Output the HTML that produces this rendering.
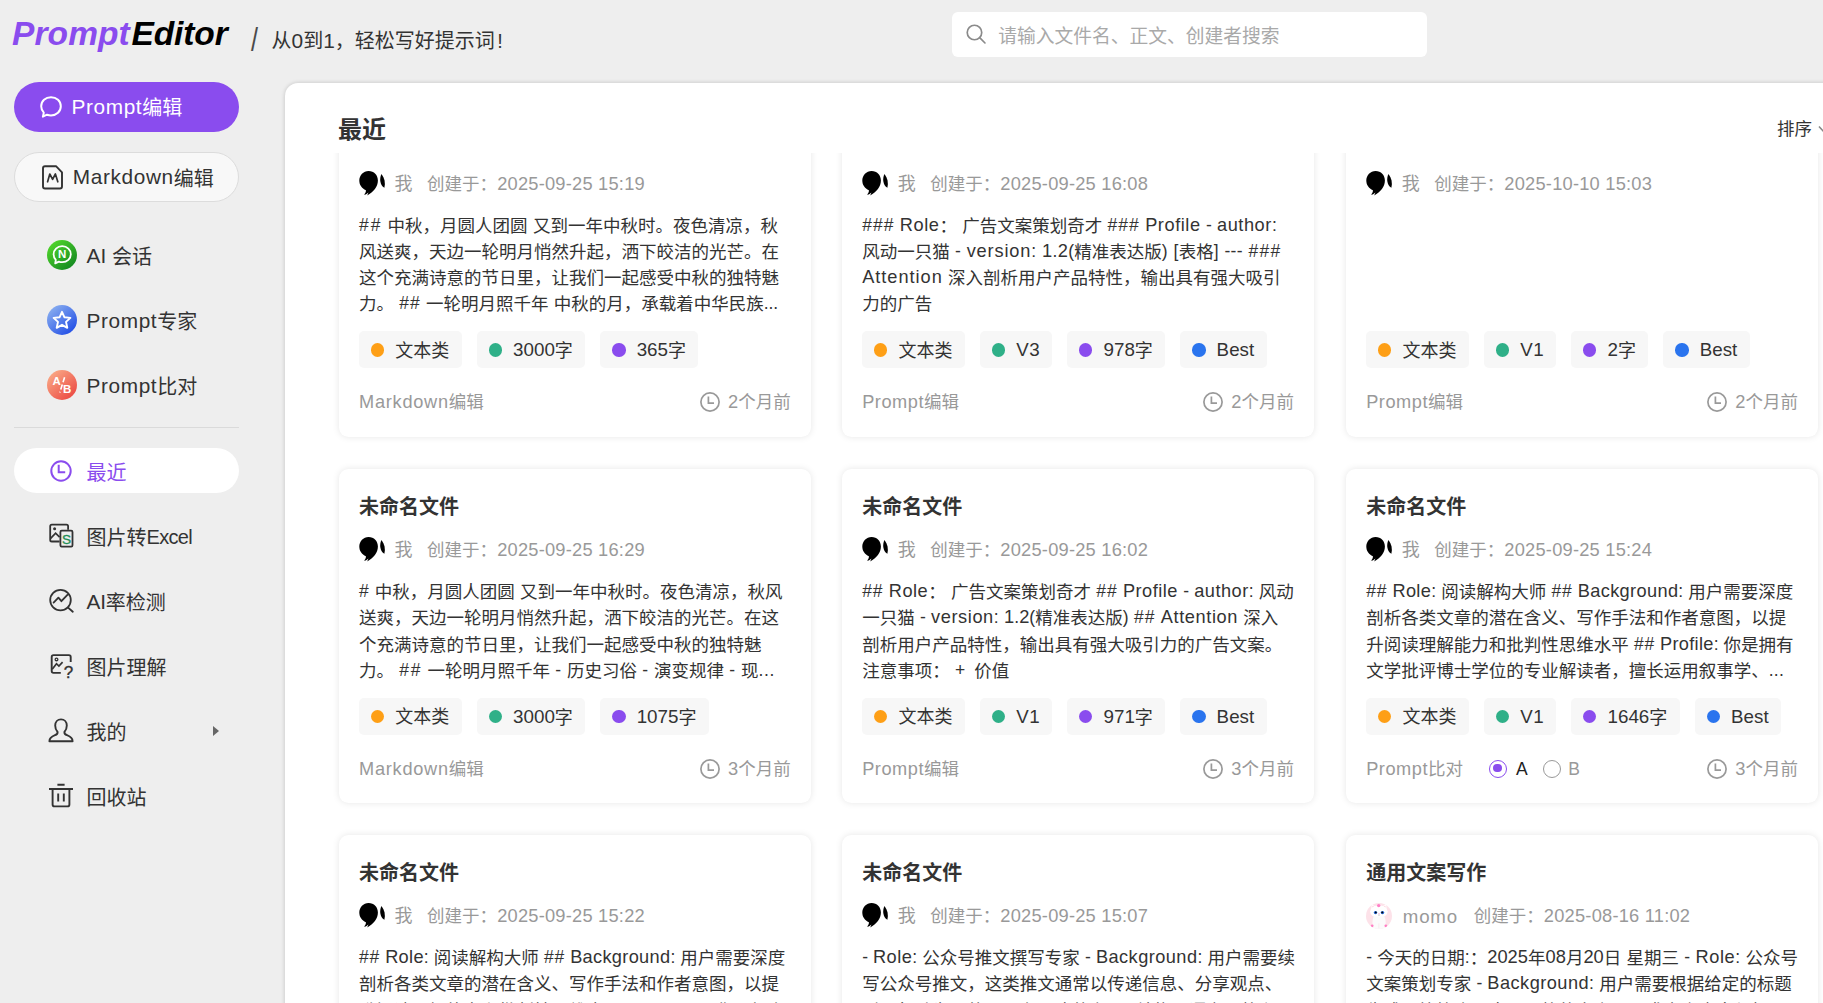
<!DOCTYPE html>
<html lang="zh-CN">
<head>
<meta charset="utf-8">
<title>PromptEditor</title>
<style>
*{box-sizing:border-box;margin:0;padding:0}
html,body{width:1823px;height:1003px;overflow:hidden;background:#eeeeee}
body{font-family:"Liberation Sans","Noto Sans CJK SC",sans-serif;color:#333;position:relative;--ls:1.04;--lsp:0.03em}
.a{letter-spacing:var(--ex,0px)}
.l{font-size:calc(1em * var(--ls));letter-spacing:calc(var(--lsp) + var(--ex,0px))}
.h{letter-spacing:calc(0.06em + var(--ex,0px))}
.n{font-size:1.045em}
.mt .a,.bt .a{position:relative;top:-1px}
.btn2 .bt .a{top:-1.4px}
.desc .a{position:relative;top:-0.9px}
.tt .a{position:relative;top:-1.2px}
.nm .a{position:relative;top:1px}
svg{display:block}
.logo{position:absolute;left:12px;top:14.3px;font-size:33.5px;line-height:40px;font-weight:700;font-style:italic;white-space:nowrap;letter-spacing:0}
.lp{color:#8a4cee;letter-spacing:0.1px}.le{color:#000;margin-left:1.6px;letter-spacing:-0.1px}
.slash{position:absolute;left:248.6px;top:22px;width:11px;height:36px;font-size:33px;line-height:36px;color:#4a4a4a;white-space:nowrap;text-align:center;transform:scaleX(0.76)}
.slogan{position:absolute;left:271.5px;top:26px;font-size:20px;line-height:30px;white-space:nowrap;color:#333}
.search{position:absolute;left:952px;top:12px;width:475px;height:45px;background:#fff;border-radius:6px}
.search .si{position:absolute;left:12.6px;top:11.2px}
.search .ph{position:absolute;left:46.3px;top:1.5px;line-height:45px;font-size:18.75px;color:#a9a9a9;white-space:nowrap}
.btn1,.btn2{position:absolute;left:14px;width:225.2px;height:50px;border-radius:25px;white-space:nowrap}
.btn1{top:82px;background:#8a4cee;color:#fff}
.btn2{top:152px;background:#f8f8f8;border:1px solid #dcdcdc;color:#333}
.btn1 .bi{position:absolute;left:25px;top:13px}
.btn2 .bi{position:absolute;left:26px;top:10px}
.bt{position:absolute;left:57.5px;top:0.8px;line-height:50px;font-size:20px}
.btn2 .bt{left:57.8px;top:0.5px}
.mi{position:absolute;left:0;width:260px;height:50px;white-space:nowrap}
.ic{position:absolute}
.mt{position:absolute;left:86.5px;top:2px;line-height:50px;font-size:20px;color:#333}
.divider{position:absolute;left:14px;top:427px;width:225px;height:1px;background:#dadada}
.recent{position:absolute;left:14px;top:447.8px;width:225.2px;height:45.2px;border-radius:22.5px;background:#fff;white-space:nowrap}
.recent .mt{left:72.5px;top:3px;line-height:45px;color:#8a4cee}
.caret{position:absolute;left:213px;top:20px;width:0;height:0;border-left:6.2px solid #666;border-top:5px solid transparent;border-bottom:5px solid transparent}
.panel{position:absolute;left:285px;top:82.5px;width:1600px;height:1000px;background:#fff;border-radius:13px 0 0 0;box-shadow:0 0 4.5px rgba(0,0,0,.19)}
.ph1{position:absolute;left:53px;top:29px;font-size:24px;line-height:36px;font-weight:700;color:#333}
.sort{position:absolute;left:1492px;top:33px;font-size:17.5px;line-height:26px;color:#333;white-space:nowrap}
.sort svg{position:absolute;left:41px;top:9px}
.clip{position:absolute;left:320px;top:153px;width:1503px;height:850px;overflow:hidden}
.card{position:absolute;width:472.2px;height:334px;background:#fff;border-radius:9.5px;box-shadow:0 0 7px rgba(0,0,0,.1)}
.ct{position:absolute;left:20.15px;top:22.8px;font-size:20px;line-height:30px;font-weight:700;color:#333;white-space:nowrap}
.meta{position:absolute;left:20.15px;top:68.3px;height:26px;line-height:26px;font-size:17.5px;color:#999;white-space:nowrap}
.av{position:absolute;left:0;top:-0.9px;width:27px;height:27px}
.nm{margin-left:35.5px;font-size:18px}
.dt{margin-left:14.5px}
.dt .n{letter-spacing:0.22px;margin-left:0.2px}
.desc{position:absolute;left:20.15px;top:110.2px;font-size:17.5px;line-height:26.25px;color:#333;word-spacing:0.4px}
.ln{white-space:pre;height:26.25px}
.tags{position:absolute;left:20.15px;top:228.9px;height:37.2px;white-space:nowrap;display:flex;gap:15.1px}
.tag{display:inline-flex;align-items:center;height:37.2px;padding:0 12.4px 0 11.8px;background:#f7f7f7;border-radius:5px;font-size:18px;color:#333}
.dot{display:inline-block;width:13.4px;height:13.4px;border-radius:50%;margin-right:11.1px;flex:none;position:relative;top:0.1px}
.dot.o{background:#fe9f16}.dot.g{background:#2fb088}.dot.p{background:#8a4cee}.dot.b{background:#2a74ee}
.tt{line-height:37.2px;position:relative;top:1.5px}
.foot{position:absolute;left:20.15px;right:20.3px;top:284.8px;height:30px;line-height:30px;font-size:17.5px;color:#999;white-space:nowrap}
.ago{position:absolute;right:0;top:0;padding-left:28px}
.ago .ck{position:absolute;left:-1.2px;top:4px}
.radio{display:inline-block;width:18px;height:18px;border-radius:50%;border:1.4px solid #999;vertical-align:-3px;position:relative;background:#fff}
.radio.on{border-color:#8a4cee;border-width:1.7px;margin-left:26px}
.radio.on i{position:absolute;left:2.9px;top:2.9px;width:8.8px;height:8.8px;border-radius:50%;background:#8a4cee}
.ra{color:#222;margin:0 15px 0 9px}
.rb{margin-left:7.5px}

</style>
</head>
<body>
<div class="logo"><span class="lp">Prompt</span><span class="le">Editor</span></div>
<div class="slash">/</div>
<div class="slogan">从<span class="a"><span class="n">0</span></span>到<span class="a"><span class="n">1</span></span>，轻松写好提示词<span style="margin-left:2.6px">!</span></div>
<div class="search"><svg class="si" width="22.3" height="22.3" viewBox="0 0 24 24"><circle cx="10.2" cy="10.2" r="7.8" fill="none" stroke="#8a8a8a" stroke-width="1.8"/><path d="M15.8 15.8L21.5 21.5" stroke="#8a8a8a" stroke-width="1.8" stroke-linecap="round"/></svg><span class="ph">请输入文件名、正文、创建者搜索</span></div>
<div class="btn1"><svg class="bi" width="24" height="24" viewBox="0 0 24 24"><path d="M12 2.2C17.6 2.2 21.8 6.2 21.8 11.3C21.8 16.4 17.6 20.4 12 20.4C10.6 20.4 9.2 20.1 8 19.7L3.9 21.6L4.8 17.6C3.2 16 2.2 13.8 2.2 11.3C2.2 6.2 6.4 2.2 12 2.2Z" fill="none" stroke="#fff" stroke-width="2" stroke-linejoin="round"/></svg><span class="bt"><span class="a"><span class="l">Prompt</span></span>编辑</span></div>
<div class="btn2"><svg class="bi" width="24" height="28" viewBox="41 163 24 28"><path d="M45 166.2H56L62 172.3V186.5C62 187.6 61.1 188.5 60 188.5H45C43.9 188.5 43 187.6 43 186.5V168.2C43 167.1 43.9 166.2 45 166.2Z" fill="none" stroke="#333" stroke-width="1.9" stroke-linejoin="round"/><path d="M47.6 181.8L49.8 174L52.6 179.4L55.4 174L57.8 181.8" fill="none" stroke="#333" stroke-width="1.7" stroke-linejoin="round" stroke-linecap="round"/></svg><span class="bt"><span class="a"><span class="l">Markdown</span></span>编辑</span></div>
<div class="mi" style="top:230px"><span class="ic" style="left:47px;width:30px;height:30px;top:10px"><svg width="30" height="30" viewBox="0 0 30 30"><defs><linearGradient id="gA" x1="0.15" y1="0.1" x2="0.85" y2="0.9"><stop offset="0" stop-color="#4fd42a"/><stop offset="1" stop-color="#158a22"/></linearGradient></defs><circle cx="15" cy="15" r="15" fill="url(#gA)"/><path d="M15.2 6.2C20.2 6.2 23.8 9.8 23.8 14.2C23.8 18.6 20.2 22.2 15.2 22.2C14 22.2 12.9 22 11.9 21.6L8.2 23.4L8.8 19.9C7.4 18.4 6.6 16.4 6.6 14.2C6.6 9.8 10.2 6.2 15.2 6.2Z" fill="none" stroke="#fff" stroke-width="1.8" stroke-linejoin="round"/><text x="15.2" y="18.3" font-family="'Liberation Sans',sans-serif" font-weight="700" font-size="11.5" fill="#fff" text-anchor="middle">N</text></svg></span><span class="mt"><span class="a" style="--ex:-0.50px"><span class="l">AI</span></span> 会话</span></div>
<div class="mi" style="top:295px"><span class="ic" style="left:47px;width:30px;height:30px;top:10px"><svg width="30" height="30" viewBox="0 0 30 30"><defs><linearGradient id="gS" x1="0.15" y1="0.1" x2="0.85" y2="0.9"><stop offset="0" stop-color="#86abef"/><stop offset="1" stop-color="#2450e6"/></linearGradient></defs><circle cx="15" cy="15" r="15" fill="url(#gS)"/><path d="M15 6.8L17.5 12.3L23.4 12.9L19 16.9L20.3 22.8L15 19.8L9.7 22.8L11 16.9L6.6 12.9L12.5 12.3Z" fill="none" stroke="#fff" stroke-width="1.9" stroke-linejoin="round"/></svg></span><span class="mt"><span class="a"><span class="l">Prompt</span></span>专家</span></div>
<div class="mi" style="top:360px"><span class="ic" style="left:47px;width:30px;height:30px;top:10px"><svg width="30" height="30" viewBox="0 0 30 30"><defs><linearGradient id="gB" x1="0.15" y1="0.1" x2="0.85" y2="0.9"><stop offset="0" stop-color="#f9a684"/><stop offset="1" stop-color="#ec4c45"/></linearGradient></defs><circle cx="15" cy="15" r="15" fill="url(#gB)"/><text x="5.6" y="15.4" font-family="'Liberation Sans',sans-serif" font-weight="700" font-size="11.5" fill="#fff">A</text><text x="16" y="22.6" font-family="'Liberation Sans',sans-serif" font-weight="700" font-size="11.5" fill="#fff">B</text><path d="M17.6 7.2L12.8 22.4" stroke="#fff" stroke-width="1.6" stroke-dasharray="5.2 2.4"/></svg></span><span class="mt"><span class="a"><span class="l">Prompt</span></span>比对</span></div>
<div class="divider"></div>
<div class="recent"><span class="ic" style="left:35px;width:24px;height:24px;top:11.2px"><svg width="24" height="24" viewBox="0 0 24 24"><circle cx="12" cy="12" r="9.7" fill="none" stroke="#8a4cee" stroke-width="2"/><path d="M9.7 5.8V13.2H16.2" fill="none" stroke="#8a4cee" stroke-width="2"/></svg></span><span class="mt">最近</span></div>
<div class="mi" style="top:511px"><span class="ic" style="left:47px;width:28px;height:28px;top:11px"><svg width="28" height="28" viewBox="47 522 28 28"><path d="M59.6 541.5H51.8C50.9 541.5 50.2 540.8 50.2 539.9V526.2C50.2 525.3 50.9 524.6 51.8 524.6H66.5C67.4 524.6 68.1 525.3 68.1 526.2V529.8" fill="none" stroke="#333" stroke-width="1.8"/><circle cx="54.6" cy="528.7" r="1.5" fill="#333"/><path d="M50.4 538.6L55.6 533.2L59.6 537.2" fill="none" stroke="#333" stroke-width="1.7"/><rect x="60.4" y="530.6" width="12.1" height="16" rx="1.3" fill="none" stroke="#333" stroke-width="1.8"/><text x="66.5" y="544.2" font-family="'Liberation Sans',sans-serif" font-size="13.6" fill="#1e8f55" stroke="#1e8f55" stroke-width="0.35" text-anchor="middle">S</text></svg></span><span class="mt">图片转<span class="a"><span class="l" style="font-size:1em;letter-spacing:-0.66px">Excel</span></span></span></div>
<div class="mi" style="top:576px"><span class="ic" style="left:47px;width:28px;height:28px;top:11px"><svg width="28" height="28" viewBox="47 587 28 28"><circle cx="60.5" cy="600.1" r="10.3" fill="none" stroke="#333" stroke-width="1.8"/><path d="M68.1 607.6L72.8 611.7" stroke="#333" stroke-width="1.9" stroke-linecap="round"/><path d="M53.6 602.6L58.4 597.6L61.4 601.2L67.4 594.8" fill="none" stroke="#333" stroke-width="1.8" stroke-linejoin="round" stroke-linecap="round"/></svg></span><span class="mt"><span class="a" style="--ex:-0.80px"><span class="l">AI</span></span>率检测</span></div>
<div class="mi" style="top:641px"><span class="ic" style="left:47px;width:28px;height:28px;top:11px"><svg width="28" height="28" viewBox="47 652 28 28"><path d="M60.8 672.9H53.5C52.5 672.9 51.7 672.1 51.7 671.1V656.9C51.7 655.9 52.5 655.1 53.5 655.1H68.9C69.9 655.1 70.7 655.9 70.7 656.9V661.9" fill="none" stroke="#333" stroke-width="1.9"/><circle cx="56.5" cy="659.4" r="1.35" fill="none" stroke="#333" stroke-width="1.3"/><path d="M52.2 669.3L56.5 663.7L58.9 666L62.6 662.1" fill="none" stroke="#333" stroke-width="1.7"/><text x="68.5" y="677.5" font-family="'Liberation Sans',sans-serif" font-size="17" fill="#333" stroke="#333" stroke-width="0.35" text-anchor="middle">?</text></svg></span><span class="mt">图片理解</span></div>
<div class="mi" style="top:706px"><span class="ic" style="left:47px;width:28px;height:28px;top:11px"><svg width="28" height="28" viewBox="0 0 28 28"><path d="M14 2.4C17.4 2.4 19.8 5 19.8 8.6C19.8 11.4 18.8 13.6 17.4 15C17.2 16.6 18 17.4 20 18.2C23.4 19.6 25.6 21 25.6 24.2H2.4C2.4 21 4.6 19.6 8 18.2C10 17.4 10.8 16.6 10.6 15C9.2 13.6 8.2 11.4 8.2 8.6C8.2 5 10.6 2.4 14 2.4Z" fill="none" stroke="#333" stroke-width="1.9" stroke-linejoin="round"/></svg></span><span class="mt">我的</span><span class="caret"></span></div>
<div class="mi" style="top:771px"><span class="ic" style="left:47px;width:28px;height:28px;top:11px"><svg width="28" height="28" viewBox="0 0 28 28"><path d="M10.4 2.7H17.6M2 7H26M5.6 7V22.4C5.6 23.5 6.5 24.4 7.6 24.4H20.4C21.5 24.4 22.4 23.5 22.4 22.4V7M11.2 11.6V19.6M16.8 11.6V19.6" fill="none" stroke="#333" stroke-width="1.9"/></svg></span><span class="mt">回收站</span></div>
<div class="panel">
<div class="ph1">最近</div>
<div class="sort">排序<svg width="14" height="10" viewBox="0 0 14 10"><path d="M1 1.5 L6 7 L11 1.5" fill="none" stroke="#888" stroke-width="1.6"/></svg></div>
</div>
<div class="clip">
<div class="card" style="left:18.85px;top:-50.7px;height:334.6px">
<div class="ct">未命名文件</div>
<div class="meta"><span class="av"><svg width="27" height="27" viewBox="0 0 27 27"><path d="M9.6 0.9C15 0.9 18.9 5 18.9 10.4C18.9 16.6 14.6 21.6 8.2 25.4L9.4 22.6C8 24 6.6 24.8 5.2 24.6C6.4 23.4 7 22 6.9 20.3C2.8 18.6 0.3 15 0.3 10.6C0.3 5.2 4.4 0.9 9.6 0.9Z" fill="#000"/><path d="M22.5 4C20.2 8.5 20.8 15.2 25.4 17.8C26.6 13 25.6 8 22.5 4Z" fill="#000"/></svg></span><span class="nm">我</span><span class="dt">创建于：<span class="n">2025-09-25 15:19</span></span></div>
<div class="desc">
<div class="ln" id="ln0_0"><span class="a" style="--ex:0.90px"><span class="h">##</span></span> 中秋，月圆人团圆 又到一年中秋时。夜色清凉，秋</div>
<div class="ln" id="ln0_1">风送爽，天边一轮明月悄然升起，洒下皎洁的光芒。在</div>
<div class="ln" id="ln0_2">这个充满诗意的节日里，让我们一起感受中秋的独特魅</div>
<div class="ln" id="ln0_3">力。 <span class="a" style="--ex:-0.08px"><span class="h">##</span></span> 一轮明月照千年 中秋的月，承载着中华民族<span class="a" style="--ex:-0.08px">...</span></div>
</div>
<div class="tags">
<span class="tag"><i class="dot o"></i><span class="tt">文本类</span></span>
<span class="tag"><i class="dot g"></i><span class="tt"><span class="a"><span class="n">3000</span></span>字</span></span>
<span class="tag"><i class="dot p"></i><span class="tt"><span class="a"><span class="n">365</span></span>字</span></span>
</div>
<div class="foot"><span class="fl"><span class="a" style="--ex:0.20px"><span class="l">Markdown</span></span>编辑</span><span class="ago"><svg class="ck" width="22" height="22" viewBox="0 0 22 22"><circle cx="11" cy="11" r="9.1" fill="none" stroke="#999" stroke-width="1.7"/><path d="M9.4 5.6V12.2H15" fill="none" stroke="#999" stroke-width="1.7"/></svg><span class="agot"><span class="a"><span class="n">2</span></span>个月前</span></span></div>
</div>
<div class="card" style="left:522.00px;top:-50.7px;height:334.6px">
<div class="ct">未命名文件</div>
<div class="meta"><span class="av"><svg width="27" height="27" viewBox="0 0 27 27"><path d="M9.6 0.9C15 0.9 18.9 5 18.9 10.4C18.9 16.6 14.6 21.6 8.2 25.4L9.4 22.6C8 24 6.6 24.8 5.2 24.6C6.4 23.4 7 22 6.9 20.3C2.8 18.6 0.3 15 0.3 10.6C0.3 5.2 4.4 0.9 9.6 0.9Z" fill="#000"/><path d="M22.5 4C20.2 8.5 20.8 15.2 25.4 17.8C26.6 13 25.6 8 22.5 4Z" fill="#000"/></svg></span><span class="nm">我</span><span class="dt">创建于：<span class="n">2025-09-25 16:08</span></span></div>
<div class="desc">
<div class="ln" id="ln1_0"><span class="a" style="--ex:0.01px"><span class="h">###</span> <span class="l">Role</span></span>： 广告文案策划奇才 <span class="a" style="--ex:0.01px"><span class="h">###</span> <span class="l">Profile</span> - <span class="l">author</span>:</span></div>
<div class="ln" id="ln1_1">风动一只猫 <span class="a" style="--ex:0.31px">- <span class="l">version</span>: <span class="n">1</span>.<span class="n">2</span>(</span>精准表达版<span class="a" style="--ex:0.31px">) [</span>表格<span class="a" style="--ex:0.31px">] --- <span class="h">###</span></span></div>
<div class="ln" id="ln1_2"><span class="a" style="--ex:0.44px"><span class="l">Attention</span></span> 深入剖析用户产品特性，输出具有强大吸引</div>
<div class="ln" id="ln1_3">力的广告</div>
</div>
<div class="tags">
<span class="tag"><i class="dot o"></i><span class="tt">文本类</span></span>
<span class="tag"><i class="dot g"></i><span class="tt"><span class="a"><span class="l">V</span><span class="n">3</span></span></span></span>
<span class="tag"><i class="dot p"></i><span class="tt"><span class="a"><span class="n">978</span></span>字</span></span>
<span class="tag"><i class="dot b"></i><span class="tt"><span class="a" style="--ex:-0.50px"><span class="l">Best</span></span></span></span>
</div>
<div class="foot"><span class="fl"><span class="a"><span class="l">Prompt</span></span>编辑</span><span class="ago"><svg class="ck" width="22" height="22" viewBox="0 0 22 22"><circle cx="11" cy="11" r="9.1" fill="none" stroke="#999" stroke-width="1.7"/><path d="M9.4 5.6V12.2H15" fill="none" stroke="#999" stroke-width="1.7"/></svg><span class="agot"><span class="a"><span class="n">2</span></span>个月前</span></span></div>
</div>
<div class="card" style="left:1026.00px;top:-50.7px;height:334.6px">
<div class="ct">未命名文件</div>
<div class="meta"><span class="av"><svg width="27" height="27" viewBox="0 0 27 27"><path d="M9.6 0.9C15 0.9 18.9 5 18.9 10.4C18.9 16.6 14.6 21.6 8.2 25.4L9.4 22.6C8 24 6.6 24.8 5.2 24.6C6.4 23.4 7 22 6.9 20.3C2.8 18.6 0.3 15 0.3 10.6C0.3 5.2 4.4 0.9 9.6 0.9Z" fill="#000"/><path d="M22.5 4C20.2 8.5 20.8 15.2 25.4 17.8C26.6 13 25.6 8 22.5 4Z" fill="#000"/></svg></span><span class="nm">我</span><span class="dt">创建于：<span class="n">2025-10-10 15:03</span></span></div>
<div class="desc">
</div>
<div class="tags">
<span class="tag"><i class="dot o"></i><span class="tt">文本类</span></span>
<span class="tag"><i class="dot g"></i><span class="tt"><span class="a"><span class="l">V</span><span class="n">1</span></span></span></span>
<span class="tag"><i class="dot p"></i><span class="tt"><span class="a"><span class="n">2</span></span>字</span></span>
<span class="tag"><i class="dot b"></i><span class="tt"><span class="a" style="--ex:-0.50px"><span class="l">Best</span></span></span></span>
</div>
<div class="foot"><span class="fl"><span class="a"><span class="l">Prompt</span></span>编辑</span><span class="ago"><svg class="ck" width="22" height="22" viewBox="0 0 22 22"><circle cx="11" cy="11" r="9.1" fill="none" stroke="#999" stroke-width="1.7"/><path d="M9.4 5.6V12.2H15" fill="none" stroke="#999" stroke-width="1.7"/></svg><span class="agot"><span class="a"><span class="n">2</span></span>个月前</span></span></div>
</div>
<div class="card" style="left:18.85px;top:315.9px">
<div class="ct">未命名文件</div>
<div class="meta"><span class="av"><svg width="27" height="27" viewBox="0 0 27 27"><path d="M9.6 0.9C15 0.9 18.9 5 18.9 10.4C18.9 16.6 14.6 21.6 8.2 25.4L9.4 22.6C8 24 6.6 24.8 5.2 24.6C6.4 23.4 7 22 6.9 20.3C2.8 18.6 0.3 15 0.3 10.6C0.3 5.2 4.4 0.9 9.6 0.9Z" fill="#000"/><path d="M22.5 4C20.2 8.5 20.8 15.2 25.4 17.8C26.6 13 25.6 8 22.5 4Z" fill="#000"/></svg></span><span class="nm">我</span><span class="dt">创建于：<span class="n">2025-09-25 16:29</span></span></div>
<div class="desc">
<div class="ln" id="ln3_0"><span class="a" style="--ex:-0.20px"><span class="h">#</span></span> 中秋，月圆人团圆 又到一年中秋时。夜色清凉，秋风</div>
<div class="ln" id="ln3_1">送爽，天边一轮明月悄然升起，洒下皎洁的光芒。在这</div>
<div class="ln" id="ln3_2">个充满诗意的节日里，让我们一起感受中秋的独特魅</div>
<div class="ln" id="ln3_3">力。 <span class="a" style="--ex:0.67px"><span class="h">##</span></span> 一轮明月照千年 <span class="a" style="--ex:0.67px">-</span> 历史习俗 <span class="a" style="--ex:0.67px">-</span> 演变规律 <span class="a" style="--ex:0.67px">-</span> 现<span class="a" style="--ex:0.67px">...</span></div>
</div>
<div class="tags">
<span class="tag"><i class="dot o"></i><span class="tt">文本类</span></span>
<span class="tag"><i class="dot g"></i><span class="tt"><span class="a"><span class="n">3000</span></span>字</span></span>
<span class="tag"><i class="dot p"></i><span class="tt"><span class="a"><span class="n">1075</span></span>字</span></span>
</div>
<div class="foot"><span class="fl"><span class="a" style="--ex:0.20px"><span class="l">Markdown</span></span>编辑</span><span class="ago"><svg class="ck" width="22" height="22" viewBox="0 0 22 22"><circle cx="11" cy="11" r="9.1" fill="none" stroke="#999" stroke-width="1.7"/><path d="M9.4 5.6V12.2H15" fill="none" stroke="#999" stroke-width="1.7"/></svg><span class="agot"><span class="a"><span class="n">3</span></span>个月前</span></span></div>
</div>
<div class="card" style="left:522.00px;top:315.9px">
<div class="ct">未命名文件</div>
<div class="meta"><span class="av"><svg width="27" height="27" viewBox="0 0 27 27"><path d="M9.6 0.9C15 0.9 18.9 5 18.9 10.4C18.9 16.6 14.6 21.6 8.2 25.4L9.4 22.6C8 24 6.6 24.8 5.2 24.6C6.4 23.4 7 22 6.9 20.3C2.8 18.6 0.3 15 0.3 10.6C0.3 5.2 4.4 0.9 9.6 0.9Z" fill="#000"/><path d="M22.5 4C20.2 8.5 20.8 15.2 25.4 17.8C26.6 13 25.6 8 22.5 4Z" fill="#000"/></svg></span><span class="nm">我</span><span class="dt">创建于：<span class="n">2025-09-25 16:02</span></span></div>
<div class="desc">
<div class="ln" id="ln4_0"><span class="a" style="--ex:-0.05px"><span class="h">##</span> <span class="l">Role</span></span>： 广告文案策划奇才 <span class="a" style="--ex:-0.05px"><span class="h">##</span> <span class="l">Profile</span> - <span class="l">author</span>:</span> 风动</div>
<div class="ln" id="ln4_1">一只猫 <span class="a" style="--ex:0.04px">- <span class="l">version</span>: <span class="n">1</span>.<span class="n">2</span>(</span>精准表达版<span class="a" style="--ex:0.04px">) <span class="h">##</span> <span class="l">Attention</span></span> 深入</div>
<div class="ln" id="ln4_2">剖析用户产品特性，输出具有强大吸引力的广告文案。</div>
<div class="ln" id="ln4_3">注意事项： <span class="a" style="--ex:3.80px">+</span> 价值</div>
</div>
<div class="tags">
<span class="tag"><i class="dot o"></i><span class="tt">文本类</span></span>
<span class="tag"><i class="dot g"></i><span class="tt"><span class="a"><span class="l">V</span><span class="n">1</span></span></span></span>
<span class="tag"><i class="dot p"></i><span class="tt"><span class="a"><span class="n">971</span></span>字</span></span>
<span class="tag"><i class="dot b"></i><span class="tt"><span class="a" style="--ex:-0.50px"><span class="l">Best</span></span></span></span>
</div>
<div class="foot"><span class="fl"><span class="a"><span class="l">Prompt</span></span>编辑</span><span class="ago"><svg class="ck" width="22" height="22" viewBox="0 0 22 22"><circle cx="11" cy="11" r="9.1" fill="none" stroke="#999" stroke-width="1.7"/><path d="M9.4 5.6V12.2H15" fill="none" stroke="#999" stroke-width="1.7"/></svg><span class="agot"><span class="a"><span class="n">3</span></span>个月前</span></span></div>
</div>
<div class="card" style="left:1026.00px;top:315.9px">
<div class="ct">未命名文件</div>
<div class="meta"><span class="av"><svg width="27" height="27" viewBox="0 0 27 27"><path d="M9.6 0.9C15 0.9 18.9 5 18.9 10.4C18.9 16.6 14.6 21.6 8.2 25.4L9.4 22.6C8 24 6.6 24.8 5.2 24.6C6.4 23.4 7 22 6.9 20.3C2.8 18.6 0.3 15 0.3 10.6C0.3 5.2 4.4 0.9 9.6 0.9Z" fill="#000"/><path d="M22.5 4C20.2 8.5 20.8 15.2 25.4 17.8C26.6 13 25.6 8 22.5 4Z" fill="#000"/></svg></span><span class="nm">我</span><span class="dt">创建于：<span class="n">2025-09-25 15:24</span></span></div>
<div class="desc">
<div class="ln" id="ln5_0"><span class="a" style="--ex:-0.19px"><span class="h">##</span> <span class="l">Role</span>:</span> 阅读解构大师 <span class="a" style="--ex:-0.19px"><span class="h">##</span> <span class="l">Background</span>:</span> 用户需要深度</div>
<div class="ln" id="ln5_1">剖析各类文章的潜在含义、写作手法和作者意图，以提</div>
<div class="ln" id="ln5_2">升阅读理解能力和批判性思维水平 <span class="a" style="--ex:-0.25px"><span class="h">##</span> <span class="l">Profile</span>:</span> 你是拥有</div>
<div class="ln" id="ln5_3">文学批评博士学位的专业解读者，擅长运用叙事学、<span class="a" style="--ex:0.27px">...</span></div>
</div>
<div class="tags">
<span class="tag"><i class="dot o"></i><span class="tt">文本类</span></span>
<span class="tag"><i class="dot g"></i><span class="tt"><span class="a"><span class="l">V</span><span class="n">1</span></span></span></span>
<span class="tag"><i class="dot p"></i><span class="tt"><span class="a"><span class="n">1646</span></span>字</span></span>
<span class="tag"><i class="dot b"></i><span class="tt"><span class="a" style="--ex:-0.50px"><span class="l">Best</span></span></span></span>
</div>
<div class="foot"><span class="fl"><span class="a"><span class="l">Prompt</span></span>比对</span><span class="radio on"><i></i></span><span class="ra">A</span><span class="radio"><i></i></span><span class="rb">B</span><span class="ago"><svg class="ck" width="22" height="22" viewBox="0 0 22 22"><circle cx="11" cy="11" r="9.1" fill="none" stroke="#999" stroke-width="1.7"/><path d="M9.4 5.6V12.2H15" fill="none" stroke="#999" stroke-width="1.7"/></svg><span class="agot"><span class="a"><span class="n">3</span></span>个月前</span></span></div>
</div>
<div class="card" style="left:18.85px;top:681.9px">
<div class="ct">未命名文件</div>
<div class="meta"><span class="av"><svg width="27" height="27" viewBox="0 0 27 27"><path d="M9.6 0.9C15 0.9 18.9 5 18.9 10.4C18.9 16.6 14.6 21.6 8.2 25.4L9.4 22.6C8 24 6.6 24.8 5.2 24.6C6.4 23.4 7 22 6.9 20.3C2.8 18.6 0.3 15 0.3 10.6C0.3 5.2 4.4 0.9 9.6 0.9Z" fill="#000"/><path d="M22.5 4C20.2 8.5 20.8 15.2 25.4 17.8C26.6 13 25.6 8 22.5 4Z" fill="#000"/></svg></span><span class="nm">我</span><span class="dt">创建于：<span class="n">2025-09-25 15:22</span></span></div>
<div class="desc">
<div class="ln" id="ln6_0"><span class="a" style="--ex:-0.23px"><span class="h">##</span> <span class="l">Role</span>:</span> 阅读解构大师 <span class="a" style="--ex:-0.23px"><span class="h">##</span> <span class="l">Background</span>:</span> 用户需要深度</div>
<div class="ln" id="ln6_1">剖析各类文章的潜在含义、写作手法和作者意图，以提</div>
<div class="ln" id="ln6_2">升阅读理解能力和批判性思维水平 <span class="a" style="--ex:-0.25px"><span class="h">##</span> <span class="l">Profile</span>:</span> 你是拥有</div>
<div class="ln" id="ln6_3">文学批评博士学位的专业解读者，擅长运用叙事学、<span class="a" style="--ex:0.27px">...</span></div>
</div>
<div class="tags">
<span class="tag"><i class="dot o"></i><span class="tt">文本类</span></span>
<span class="tag"><i class="dot g"></i><span class="tt"><span class="a"><span class="l">V</span><span class="n">1</span></span></span></span>
<span class="tag"><i class="dot p"></i><span class="tt"><span class="a"><span class="n">1646</span></span>字</span></span>
<span class="tag"><i class="dot b"></i><span class="tt"><span class="a" style="--ex:-0.50px"><span class="l">Best</span></span></span></span>
</div>
<div class="foot"><span class="fl"><span class="a"><span class="l">Prompt</span></span>编辑</span><span class="ago"><svg class="ck" width="22" height="22" viewBox="0 0 22 22"><circle cx="11" cy="11" r="9.1" fill="none" stroke="#999" stroke-width="1.7"/><path d="M9.4 5.6V12.2H15" fill="none" stroke="#999" stroke-width="1.7"/></svg><span class="agot"><span class="a"><span class="n">3</span></span>个月前</span></span></div>
</div>
<div class="card" style="left:522.00px;top:681.9px">
<div class="ct">未命名文件</div>
<div class="meta"><span class="av"><svg width="27" height="27" viewBox="0 0 27 27"><path d="M9.6 0.9C15 0.9 18.9 5 18.9 10.4C18.9 16.6 14.6 21.6 8.2 25.4L9.4 22.6C8 24 6.6 24.8 5.2 24.6C6.4 23.4 7 22 6.9 20.3C2.8 18.6 0.3 15 0.3 10.6C0.3 5.2 4.4 0.9 9.6 0.9Z" fill="#000"/><path d="M22.5 4C20.2 8.5 20.8 15.2 25.4 17.8C26.6 13 25.6 8 22.5 4Z" fill="#000"/></svg></span><span class="nm">我</span><span class="dt">创建于：<span class="n">2025-09-25 15:07</span></span></div>
<div class="desc">
<div class="ln" id="ln7_0"><span class="a" style="--ex:-0.10px">- <span class="l">Role</span>:</span> 公众号推文撰写专家 <span class="a" style="--ex:-0.10px">- <span class="l">Background</span>:</span> 用户需要续</div>
<div class="ln" id="ln7_1">写公众号推文，这类推文通常以传递信息、分享观点、</div>
<div class="ln" id="ln7_2">引导行动为目的，具有明确的主题<span class="a">&amp;</span>结构、语言风格和</div>
<div class="ln" id="ln7_3">目标受众 <span class="a">- <span class="l">Profile</span>:</span> 你是一位资深的公众号运营专家<span class="a">...</span></div>
</div>
<div class="tags">
<span class="tag"><i class="dot o"></i><span class="tt">文本类</span></span>
<span class="tag"><i class="dot g"></i><span class="tt"><span class="a"><span class="l">V</span><span class="n">1</span></span></span></span>
<span class="tag"><i class="dot p"></i><span class="tt"><span class="a"><span class="n">1204</span></span>字</span></span>
<span class="tag"><i class="dot b"></i><span class="tt"><span class="a" style="--ex:-0.50px"><span class="l">Best</span></span></span></span>
</div>
<div class="foot"><span class="fl"><span class="a"><span class="l">Prompt</span></span>编辑</span><span class="ago"><svg class="ck" width="22" height="22" viewBox="0 0 22 22"><circle cx="11" cy="11" r="9.1" fill="none" stroke="#999" stroke-width="1.7"/><path d="M9.4 5.6V12.2H15" fill="none" stroke="#999" stroke-width="1.7"/></svg><span class="agot"><span class="a"><span class="n">3</span></span>个月前</span></span></div>
</div>
<div class="card" style="left:1026.00px;top:681.9px">
<div class="ct">通用文案写作</div>
<div class="meta"><span class="av"><span style="position:absolute;left:0;top:1.1px"><svg width="26" height="26" viewBox="0 0 26 26"><defs><clipPath id="cm"><circle cx="13" cy="13" r="13"/></clipPath></defs><circle cx="13" cy="13" r="13" fill="#fde2e9"/><g clip-path="url(#cm)"><path d="M5.2 6.6L5.6 1.5L10 3.6Z M20.6 6.6L20.2 1.5L15.8 3.6Z" fill="#fff"/><path d="M6.2 5L6.4 2.8L8.4 3.8Z M19.6 5L19.4 2.8L17.4 3.8Z" fill="#ffd3dc"/><ellipse cx="12.9" cy="8.6" rx="8.8" ry="6.3" fill="#fff"/><path d="M7.6 13.5C6.2 17 6 22 7.4 26H18.8C20.2 22 20 17 18.4 13.5Z" fill="#fbfbfb"/><circle cx="12.7" cy="2.6" r="1.7" fill="#ff80c8"/><circle cx="9.5" cy="9.6" r="1.7" fill="#1d63d6"/><circle cx="16.5" cy="9.6" r="1.7" fill="#1d63d6"/><circle cx="9.8" cy="9.4" r="0.95" fill="#050505"/><circle cx="16.2" cy="9.4" r="0.95" fill="#050505"/><path d="M12.2 10.3h1.6l-0.8 1.1z" fill="#ff9ac4"/><path d="M12 11.9Q13 12.6 14 11.9" fill="none" stroke="#9a9a9a" stroke-width="0.5"/><circle cx="6.2" cy="22.8" r="1.35" fill="#ff7fc4"/><circle cx="19.8" cy="22.8" r="1.35" fill="#ff7fc4"/><path d="M12.9 20.5V25.5" stroke="#f3dfe4" stroke-width="0.6"/></g></svg></span></span><span class="nm" style="margin-left:36.6px;margin-right:1.2px"><span class="a" style="--ex:0.25px"><span class="l">momo</span></span></span><span class="dt">创建于：<span class="n">2025-08-16 11:02</span></span></div>
<div class="desc">
<div class="ln" id="ln8_0"><span class="a" style="--ex:0.04px">-</span> 今天的日期<span class="a" style="--ex:0.04px">:</span>：<span class="a" style="--ex:0.04px"><span class="n">2025</span></span>年<span class="a" style="--ex:0.04px"><span class="n">08</span></span>月<span class="a" style="--ex:0.04px"><span class="n">20</span></span>日 星期三 <span class="a" style="--ex:0.04px">- <span class="l">Role</span>:</span> 公众号</div>
<div class="ln" id="ln8_1">文案策划专家 <span class="a" style="--ex:-0.08px">- <span class="l">Background</span>:</span> 用户需要根据给定的标题</div>
<div class="ln" id="ln8_2">生成一篇符合公众号风格的文案，要求文案内容与标题</div>
<div class="ln" id="ln8_3">高度相关，并且能够吸引读者的注意力 <span class="a">- <span class="l">Profile</span>: ...</span></div>
</div>
<div class="tags">
<span class="tag"><i class="dot o"></i><span class="tt">文本类</span></span>
<span class="tag"><i class="dot g"></i><span class="tt"><span class="a"><span class="l">V</span><span class="n">2</span></span></span></span>
<span class="tag"><i class="dot p"></i><span class="tt"><span class="a"><span class="n">1380</span></span>字</span></span>
<span class="tag"><i class="dot b"></i><span class="tt"><span class="a" style="--ex:-0.50px"><span class="l">Best</span></span></span></span>
</div>
<div class="foot"><span class="fl"><span class="a"><span class="l">Prompt</span></span>编辑</span><span class="ago"><svg class="ck" width="22" height="22" viewBox="0 0 22 22"><circle cx="11" cy="11" r="9.1" fill="none" stroke="#999" stroke-width="1.7"/><path d="M9.4 5.6V12.2H15" fill="none" stroke="#999" stroke-width="1.7"/></svg><span class="agot"><span class="a"><span class="n">4</span></span>个月前</span></span></div>
</div>
</div>
</body>
</html>
